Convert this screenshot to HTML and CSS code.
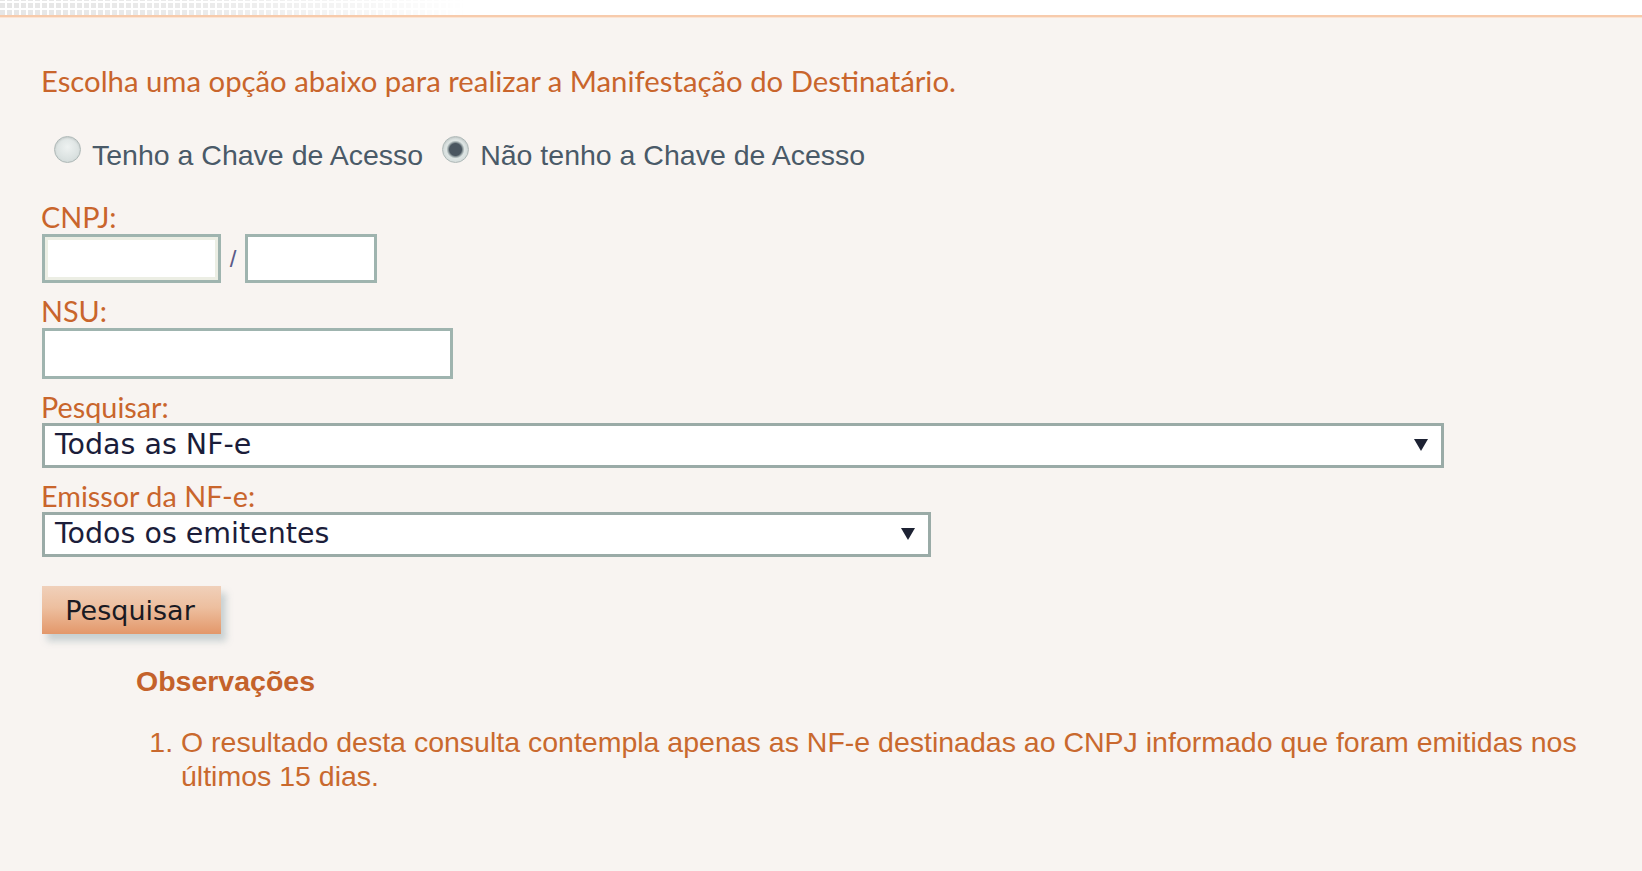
FILE: index.html
```html
<!DOCTYPE html>
<html lang="pt-BR">
<head>
<meta charset="utf-8">
<title>Manifestação do Destinatário</title>
<link rel="stylesheet" href="styles.css">
</head>
<body>
<div class="topbar"><div class="pattern"></div></div>
<main class="main">
  <p class="intro">Escolha uma opção abaixo para realizar a Manifestação do Destinatário.</p>
  <div class="radios">
    <label class="radio"><input type="radio" name="chave"><span>Tenho a Chave de Acesso</span></label>
    <label class="radio"><input type="radio" name="chave" checked><span>Não tenho a Chave de Acesso</span></label>
  </div>

  <label class="lbl lbl-cnpj">CNPJ:</label>
  <div class="cnpj-row">
    <input type="text" class="field field-cnpj1">
    <span class="slash">/</span>
    <input type="text" class="field field-cnpj2">
  </div>

  <label class="lbl lbl-gap">NSU:</label>
  <input type="text" class="field field-nsu">

  <label class="lbl lbl-gap">Pesquisar:</label>
  <div class="select select-wide">
    <span class="select-text">Todas as NF-e</span>
    <svg class="arrow" width="14" height="12" viewBox="0 0 14 12"><path d="M0 0 H14 L7 12 Z" fill="#1d2233"/></svg>
  </div>

  <label class="lbl lbl-gap">Emissor da NF-e:</label>
  <div class="select select-mid">
    <span class="select-text">Todos os emitentes</span>
    <svg class="arrow" width="14" height="12" viewBox="0 0 14 12"><path d="M0 0 H14 L7 12 Z" fill="#1d2233"/></svg>
  </div>

  <button class="btn" type="button">Pesquisar</button>

  <section class="obs">
    <h3 class="obs-title">Observações</h3>
    <ol class="obs-list">
      <li>O resultado desta consulta contempla apenas as NF-e destinadas ao CNPJ informado que foram emitidas nos últimos 15 dias.</li>
    </ol>
  </section>
</main>
</body>
</html>
```
FILE: styles.css
```css
html, body {
  margin: 0;
  padding: 0;
}
body {
  background: #f8f4f1;
  width: 1642px;
  height: 871px;
  overflow: hidden;
}
.topbar {
  height: 15px;
  background: #ffffff;
  border-bottom: 2px solid #f7cbac;
  box-shadow: 0 1px 0 #fbe4d3;
  position: relative;
}
.pattern {
  width: 470px;
  height: 15px;
  background-image:
    repeating-linear-gradient(0deg, transparent 0 5px, #ffffff 5px 7px),
    repeating-linear-gradient(90deg, #e6e6e6 0 5px, #ffffff 5px 7px);
  -webkit-mask-image: linear-gradient(90deg, #000 0, rgba(0,0,0,0.8) 45%, rgba(0,0,0,0) 100%);
  mask-image: linear-gradient(90deg, #000 0, rgba(0,0,0,0.8) 45%, rgba(0,0,0,0) 100%);
}
.main {
  display: flex;
  flex-direction: column;
  align-items: flex-start;
  padding: 0 40px 0 41px;
}
.intro {
  margin: 49px 0 0 0;
  font-family: "Lato", "Open Sans", sans-serif;
  font-size: 29.3px;
  line-height: 30px;
  color: #c9652c;
}
.radios {
  display: flex;
  align-items: center;
  margin-top: 40px;
  padding-left: 13px;
  height: 32px;
}
.radio {
  display: flex;
  align-items: center;
  font-family: "Liberation Sans", Arial, sans-serif;
  font-size: 28.5px;
  color: #4a5a68;
  margin-right: 19px;
}
.radio span {
  position: relative;
  top: 3px;
}
.radio input {
  -webkit-appearance: none;
  appearance: none;
  width: 27px;
  height: 27px;
  margin: 0 11px 0 0;
  border-radius: 50%;
  border: 1px solid #aeb8b7;
  background: radial-gradient(circle at 50% 40%, #eef2f1 0, #dbe2e1 60%, #ccd5d4 100%);
  box-shadow: inset 0 1px 2px rgba(0,0,0,0.12);
  position: relative;
  top: -3px;
}
.radio input:checked {
  background: radial-gradient(circle at 50% 50%, #4a5660 0, #4a5660 6px, #9aa6a8 7.5px, #dde4e3 9px, #d1d9d8 100%);
}
.lbl {
  display: block;
  font-family: "Lato", "Open Sans", sans-serif;
  font-size: 28.8px;
  line-height: 30px;
  color: #c9652c;
}
.lbl-cnpj {
  margin-top: 34px;
}
.lbl-gap {
  margin-top: 13px;
}
.cnpj-row {
  display: flex;
  align-items: center;
  margin-top: 2px;
  margin-left: 1px;
}
.field {
  box-sizing: border-box;
  height: 49px;
  border: 3px solid #9fb4af;
  background: #ffffff;
  margin: 0;
  padding: 0 8px;
  outline: none;
}
.field-cnpj1 {
  width: 179px;
  box-shadow: inset 0 0 0 3px #eceee4;
}
.field-cnpj2 {
  width: 132px;
}
.slash {
  font-family: "Liberation Sans", Arial, sans-serif;
  font-size: 24px;
  color: #5a5a88;
  width: 24px;
  text-align: center;
}
.field-nsu {
  width: 411px;
  height: 51px;
  margin-top: 2px;
  margin-left: 1px;
}
.select {
  box-sizing: border-box;
  height: 45px;
  margin-top: 1px;
  margin-left: 1px;
  border: 3px solid #9aaba7;
  background: #ffffff;
  display: flex;
  align-items: center;
  justify-content: space-between;
  padding: 0 13px 0 10px;
}
.select-wide {
  width: 1402px;
}
.select-mid {
  width: 889px;
}
.select-text {
  font-family: "DejaVu Sans", Verdana, sans-serif;
  font-size: 28.5px;
  color: #1b1d3a;
  line-height: 1;
}
.arrow {
  display: block;
  margin-top: -2px;
}
.btn {
  margin-top: 29px;
  margin-left: 1px;
  width: 179px;
  height: 48px;
  border: none;
  padding: 0 3px 0 0;
  background: linear-gradient(180deg, #f0d0ba 0%, #edbf9f 45%, #e3976a 100%);
  box-shadow: 5px 7px 7px rgba(110, 140, 150, 0.35);
  font-family: "DejaVu Sans", Verdana, sans-serif;
  font-size: 27px;
  color: #1a1a22;
  cursor: pointer;
}
.obs {
  margin-left: 95px;
  margin-top: 31px;
}
.obs-title {
  margin: 0;
  font-family: "Liberation Sans", Arial, sans-serif;
  font-weight: bold;
  font-size: 28.5px;
  line-height: 32px;
  color: #c4622b;
}
.obs-list {
  margin: 28px 0 0 0;
  padding-left: 45px;
  font-family: "Liberation Sans", Arial, sans-serif;
  font-size: 28.5px;
  line-height: 34px;
  color: #c9692e;
}
```
